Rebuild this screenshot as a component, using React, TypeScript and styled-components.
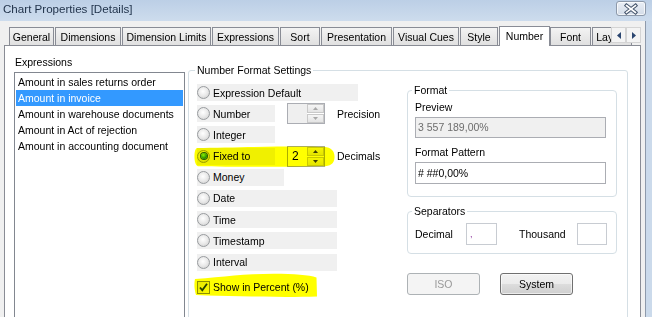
import React from 'react';
import styled, { createGlobalStyle } from 'styled-components';

const GlobalStyle = createGlobalStyle`
  html, body {
    margin: 0;
    padding: 0;
    background: #cbdaeb;
  }
  body {
    font-family: "Liberation Sans", Arial, sans-serif;
    font-size: 10.5px;
    color: #000;
  }
`;

interface TabDef {
  label: string;
  w: number;
  active?: boolean;
}

const tabs: TabDef[] = [
  { label: 'General', w: 45 },
  { label: 'Dimensions', w: 66 },
  { label: 'Dimension Limits', w: 89 },
  { label: 'Expressions', w: 67 },
  { label: 'Sort', w: 40 },
  { label: 'Presentation', w: 71 },
  { label: 'Visual Cues', w: 66 },
  { label: 'Style', w: 38 },
  { label: 'Number', w: 51, active: true },
  { label: 'Font', w: 41 },
  { label: 'Layout', w: 40 },
];

const expressions = [
  'Amount in sales returns order',
  'Amount in invoice',
  'Amount in warehouse documents',
  'Amount in Act of rejection',
  'Amount in accounting document',
];

interface FormatRow {
  label: string;
  strip: number;
  checked?: boolean;
  spin?: string;
  spinDisabled?: boolean;
  note?: string;
  marker?: boolean;
}

const formats: FormatRow[] = [
  { label: 'Expression Default', strip: 161 },
  { label: 'Number', strip: 78, spin: '', spinDisabled: true, note: 'Precision' },
  { label: 'Integer', strip: 78 },
  { label: 'Fixed to', strip: 78, checked: true, spin: '2', note: 'Decimals', marker: true },
  { label: 'Money', strip: 87 },
  { label: 'Date', strip: 140 },
  { label: 'Time', strip: 140 },
  { label: 'Timestamp', strip: 140 },
  { label: 'Interval', strip: 140 },
];

export default function App() {
  return (
    <>
      <GlobalStyle />
      <WindowS>
        <TitleBarS>
          <TitleS>Chart Properties [Details]</TitleS>
          <CloseS>
            <svg width="28" height="12" viewBox="0 0 28 12">
              <path d="M9.5 2.5 L18.5 9.5 M18.5 2.5 L9.5 9.5" stroke="#43536a" strokeWidth="3.6" strokeLinecap="square" />
              <path d="M9.5 2.5 L18.5 9.5 M18.5 2.5 L9.5 9.5" stroke="#fff" strokeWidth="1.6" strokeLinecap="square" />
            </svg>
          </CloseS>
        </TitleBarS>
        <ClientS>
          <TabStripS>
            {tabs.map((t) => (
              <TabS key={t.label} $w={t.w} $active={!!t.active}>
                {t.label}
              </TabS>
            ))}
            <ScrollS>
              <ScrollBtnS>
                <svg width="4" height="7" viewBox="0 0 4 7">
                  <path d="M4 0 L0 3.5 L4 7 Z" fill="#2b4670" />
                </svg>
              </ScrollBtnS>
              <ScrollBtnS>
                <svg width="4" height="7" viewBox="0 0 4 7">
                  <path d="M0 0 L4 3.5 L0 7 Z" fill="#2b4670" />
                </svg>
              </ScrollBtnS>
            </ScrollS>
          </TabStripS>
          <PanelS>
            <LeftColS>
              <CaptionS>Expressions</CaptionS>
              <ListS>
                {expressions.map((e, i) => (
                  <ListItemS key={e} $selected={i === 1}>
                    {e}
                  </ListItemS>
                ))}
              </ListS>
            </LeftColS>
            <MainGroupS>
              <LegendS>Number Format Settings</LegendS>
              <GroupGridS>
                <RadioListS>
                  {formats.map((f) => (
                    <RowS key={f.label}>
                      {f.marker ? (
                        <MarkerS width="141" height="21" viewBox="0 0 141 21" style={{ left: -3, top: -2 }}>
                          <path
                            d="M3 2 C40 1.2 100 0 130 0.8 C138 1.5 141 6 140.5 12 C140 18 136 20.5 128 20.3 C90 21 40 21 4 20.3 C1 19.5 0 13 0.6 7 C1 4 2 2.2 3 2 Z"
                            fill="#ffff00"
                          />
                        </MarkerS>
                      ) : null}
                      <StripS $w={f.strip}>
                        <RadioS $on={!!f.checked} />
                        <span>{f.label}</span>
                      </StripS>
                      {f.spin !== undefined ? (
                        <SpinS $disabled={!!f.spinDisabled}>
                          <SpinValueS>{f.spin}</SpinValueS>
                          <SpinBtnsS>
                            <SpinBtnS>
                              <svg width="5" height="3" viewBox="0 0 5 3">
                                <path d="M0 3 L2.5 0 L5 3 Z" fill={f.spinDisabled ? '#a8a8a8' : '#3c3c3c'} />
                              </svg>
                            </SpinBtnS>
                            <SpinBtnS>
                              <svg width="5" height="3" viewBox="0 0 5 3">
                                <path d="M0 0 L2.5 3 L5 0 Z" fill={f.spinDisabled ? '#a8a8a8' : '#3c3c3c'} />
                              </svg>
                            </SpinBtnS>
                          </SpinBtnsS>
                        </SpinS>
                      ) : null}
                      {f.note ? <NoteS>{f.note}</NoteS> : null}
                    </RowS>
                  ))}
                  <CheckRowS>
                    <MarkerS width="124" height="25" viewBox="0 0 124 25" style={{ left: -3, top: -6 }}>
                      <path
                        d="M1 6 C30 4 50 0.8 80 0.8 C100 1 115 2 122.5 4.5 L123 23.5 C90 24.5 40 23.5 2 22 C0 15 0.2 10 1 6 Z"
                        fill="#ffff00"
                      />
                    </MarkerS>
                    <CheckS>
                      <svg width="11" height="11" viewBox="0 0 11 11">
                        <path d="M2 5.5 L4.3 8.3 L9 1.8" stroke="#25402a" strokeWidth="1.8" fill="none" />
                      </svg>
                    </CheckS>
                    <span>Show in Percent (%)</span>
                  </CheckRowS>
                </RadioListS>
                <RightColS>
                  <SubGroupS>
                    <SubLegendS>Format</SubLegendS>
                    <FieldLabelS>Preview</FieldLabelS>
                    <BoxS $h={21} $readOnly>
                      3 557 189,00%
                    </BoxS>
                    <FieldLabelS $gap={7}>Format Pattern</FieldLabelS>
                    <BoxS $h={22}>#&nbsp;##0,00%</BoxS>
                  </SubGroupS>
                  <SubGroupS $gapTop={7} $padTop={5} $padBottom={8}>
                    <SubLegendS>Separators</SubLegendS>
                    <SepRowS>
                      <SepLabelS $w={51}>Decimal</SepLabelS>
                      <SepBoxS $w={31}>
                        <CommaS>,</CommaS>
                      </SepBoxS>
                      <SepLabelS $w={58} $left={22}>
                        Thousand
                      </SepLabelS>
                      <SepBoxS $w={30} />
                    </SepRowS>
                  </SubGroupS>
                  <ButtonRowS>
                    <ButtonS disabled>ISO</ButtonS>
                    <ButtonS>System</ButtonS>
                  </ButtonRowS>
                </RightColS>
              </GroupGridS>
            </MainGroupS>
          </PanelS>
        </ClientS>
      </WindowS>
    </>
  );
}

const WindowS = styled.div`
  width: 652px;
  height: 317px;
  overflow: hidden;
  display: flex;
  flex-direction: column;
  background: #cbdaeb;
`;

const TitleBarS = styled.div`
  height: 21px;
  flex: none;
  display: flex;
  justify-content: space-between;
  align-items: flex-start;
  padding: 0 6px 0 3px;
  background: linear-gradient(#bccfe6, #cddced);
`;

const TitleS = styled.span`
  font-size: 11.6px;
  line-height: 16px;
  margin-top: 1px;
  color: #1e3048;
`;

const CloseS = styled.div`
  margin-top: 1px;
  width: 30px;
  height: 15px;
  box-sizing: border-box;
  border: 1px solid #8d99aa;
  border-radius: 3px;
  background: linear-gradient(#e9eef5, #d3dce8);
  box-shadow: inset 0 0 0 1px rgba(255, 255, 255, 0.7);
  display: flex;
  align-items: center;
  justify-content: center;
`;

const ClientS = styled.div`
  flex: 1;
  min-height: 0;
  width: 646px;
  box-sizing: border-box;
  display: flex;
  flex-direction: column;
  padding: 5px 4px 0 4px;
  background: #f0f0f0;
  border-right: 1px solid #8e9aab;
`;

const TabStripS = styled.div`
  position: relative;
  z-index: 1;
  height: 20px;
  flex: none;
  display: flex;
  align-items: flex-end;
  padding-left: 5px;
  margin-bottom: -1px;
  overflow: hidden;
`;

const TabS = styled.div<{ $w: number; $active: boolean }>`
  flex: none;
  box-sizing: border-box;
  width: ${({ $w }) => $w}px;
  margin-right: ${({ $active }) => ($active ? 0 : 1)}px;
  text-align: center;
  white-space: nowrap;
  overflow: hidden;
  border: 1px solid #898c95;
  border-bottom: none;
  line-height: 15px;
  padding-top: 2px;
  ${({ $active }) =>
    $active
      ? `
    height: 20px;
    background: #fff;
  `
      : `
    height: 18px;
    margin-bottom: 1px;
    background: linear-gradient(#f3f3f3, #e0e0e0);
  `}
`;

const ScrollS = styled.div`
  position: absolute;
  right: 0;
  top: 1px;
  display: flex;
  background: #f0f0f0;
`;

const ScrollBtnS = styled.div`
  width: 15px;
  height: 16px;
  box-sizing: border-box;
  border: 1px solid #d4d4d4;
  background: #f4f4f4;
  display: flex;
  align-items: center;
  justify-content: center;
`;

const PanelS = styled.div`
  flex: 1;
  min-height: 0;
  display: flex;
  align-items: flex-start;
  border: 1px solid #898c95;
  border-bottom: none;
  background: #fff;
  overflow: hidden;
`;

const LeftColS = styled.div`
  flex: none;
  width: 171px;
  padding: 9px 0 0 9px;
`;

const CaptionS = styled.div`
  line-height: 14px;
  padding-left: 1px;
  margin-bottom: 3px;
`;

const ListS = styled.div`
  box-sizing: border-box;
  width: 171px;
  height: 260px;
  border: 1px solid #828790;
  padding: 1px;
`;

const ListItemS = styled.div<{ $selected: boolean }>`
  line-height: 16px;
  padding-left: 2px;
  white-space: nowrap;
  background: ${({ $selected }) => ($selected ? '#3399ff' : 'transparent')};
  color: ${({ $selected }) => ($selected ? '#fff' : '#000')};
`;

const MainGroupS = styled.fieldset`
  flex: none;
  box-sizing: border-box;
  width: 440px;
  height: 300px;
  margin: 17px 0 0 3px;
  padding: 0 10px 0 8px;
  min-inline-size: 0;
  border: 1px solid #d5dfe5;
  border-radius: 3px;
`;

const LegendS = styled.legend`
  padding: 0 2px;
  margin-left: -2px;
  line-height: 14px;
`;

const GroupGridS = styled.div`
  display: grid;
  grid-template-columns: 210px 210px;
`;

const RadioListS = styled.div`
  display: flex;
  flex-direction: column;
  gap: 4.2px;
  padding-top: 7px;
`;

const RowS = styled.div`
  position: relative;
  height: 17px;
  display: grid;
  grid-template-columns: 90px 38px auto;
  grid-template-rows: 17px;
  align-items: center;
`;

const MarkerS = styled.svg`
  position: absolute;
  pointer-events: none;
  mix-blend-mode: multiply;
`;

const StripS = styled.div<{ $w: number }>`
  width: ${({ $w }) => $w}px;
  height: 17px;
  display: flex;
  align-items: center;
  gap: 3px;
  background: #f0f0f0;
  white-space: nowrap;
`;

const RadioS = styled.span<{ $on: boolean }>`
  flex: none;
  box-sizing: border-box;
  width: 13px;
  height: 13px;
  border-radius: 50%;
  border: 1px solid #999c9f;
  background: radial-gradient(circle at 45% 40%, #ffffff 0%, #e9e9e9 50%, #c9c9c9 100%);
  display: flex;
  align-items: center;
  justify-content: center;
  &::after {
    content: '';
    display: ${({ $on }) => ($on ? 'block' : 'none')};
    width: 6px;
    height: 6px;
    border-radius: 50%;
    background: radial-gradient(circle at 40% 35%, #8ff08f 0%, #2e9a2e 55%, #0c5a0c 100%);
    box-shadow: 0 0 0 1px #285c28;
  }
`;

const SpinS = styled.div<{ $disabled: boolean }>`
  grid-column: 2;
  box-sizing: border-box;
  width: 38px;
  height: 21px;
  display: flex;
  border: 1px solid #abadb3;
  background: ${({ $disabled }) => ($disabled ? '#efefef' : '#fff')};
`;

const SpinValueS = styled.span`
  flex: 1;
  padding-left: 4px;
  font-size: 12px;
  line-height: 19px;
`;

const SpinBtnsS = styled.div`
  width: 17px;
  display: flex;
  flex-direction: column;
  gap: 1px;
  background: #fff;
`;

const SpinBtnS = styled.div`
  flex: 1;
  box-sizing: border-box;
  border: 1px solid #c9c9c9;
  background: linear-gradient(#f5f5f5, #e4e4e4);
  display: flex;
  align-items: center;
  justify-content: center;
`;

const NoteS = styled.span`
  grid-column: 3;
  margin-left: 12px;
  white-space: nowrap;
`;

const CheckRowS = styled.div`
  position: relative;
  height: 17px;
  margin-top: 4px;
  display: flex;
  align-items: center;
  gap: 3px;
`;

const CheckS = styled.span`
  box-sizing: border-box;
  width: 13px;
  height: 13px;
  border: 1px solid #8e8f8f;
  background: linear-gradient(135deg, #e8e8e8, #fafafa);
  display: flex;
  align-items: center;
  justify-content: center;
`;

const RightColS = styled.div`
  display: flex;
  flex-direction: column;
`;

const SubGroupS = styled.fieldset<{ $gapTop?: number; $padTop?: number; $padBottom?: number }>`
  box-sizing: border-box;
  width: 210px;
  margin: ${({ $gapTop = 6 }) => $gapTop}px 0 0 0;
  padding: ${({ $padTop = 3 }) => $padTop}px 9px ${({ $padBottom = 12 }) => $padBottom}px 7px;
  min-inline-size: 0;
  border: 1px solid #d5dfe5;
  border-radius: 4px;
  display: flex;
  flex-direction: column;
`;

const SubLegendS = styled.legend`
  padding: 0 2px;
  margin-left: -3px;
  line-height: 14px;
`;

const FieldLabelS = styled.div<{ $gap?: number }>`
  line-height: 14px;
  margin-top: ${({ $gap = 0 }) => $gap}px;
  margin-bottom: 3px;
`;

const BoxS = styled.div<{ $h: number; $readOnly?: boolean }>`
  box-sizing: border-box;
  width: 191px;
  height: ${({ $h }) => $h}px;
  line-height: ${({ $h }) => $h - 2}px;
  padding-left: 2px;
  border: 1px solid #abadb3;
  background: ${({ $readOnly }) => ($readOnly ? '#f0f0f0' : '#fff')};
  color: ${({ $readOnly }) => ($readOnly ? '#6d6d6d' : '#000')};
`;

const SepRowS = styled.div`
  height: 22px;
  display: flex;
  align-items: center;
`;

const SepLabelS = styled.span<{ $w: number; $left?: number }>`
  width: ${({ $w }) => $w}px;
  margin-left: ${({ $left = 0 }) => $left}px;
  flex: none;
`;

const SepBoxS = styled.div<{ $w: number }>`
  box-sizing: border-box;
  width: ${({ $w }) => $w}px;
  height: 22px;
  border: 1px solid #c8ccd2;
  background: #fff;
  padding-left: 3px;
  line-height: 18px;
`;

const CommaS = styled.span`
  color: #8a2f9a;
  font-size: 9px;
`;

const ButtonRowS = styled.div`
  display: flex;
  gap: 20px;
  margin-top: 19px;
`;

const ButtonS = styled.button`
  box-sizing: border-box;
  width: 73px;
  height: 22px;
  padding: 0;
  font-family: inherit;
  font-size: 10.5px;
  border-radius: 3px;
  border: 1px solid #707070;
  color: #000;
  background: linear-gradient(#f2f2f2 0%, #ebebeb 50%, #dddddd 51%, #cfcfcf 100%);
  box-shadow: inset 0 0 0 1px rgba(255, 255, 255, 0.6);
  &:disabled {
    border-color: #adb2b5;
    background: #f4f4f4;
    color: #9a9a9a;
    box-shadow: none;
  }
`;
